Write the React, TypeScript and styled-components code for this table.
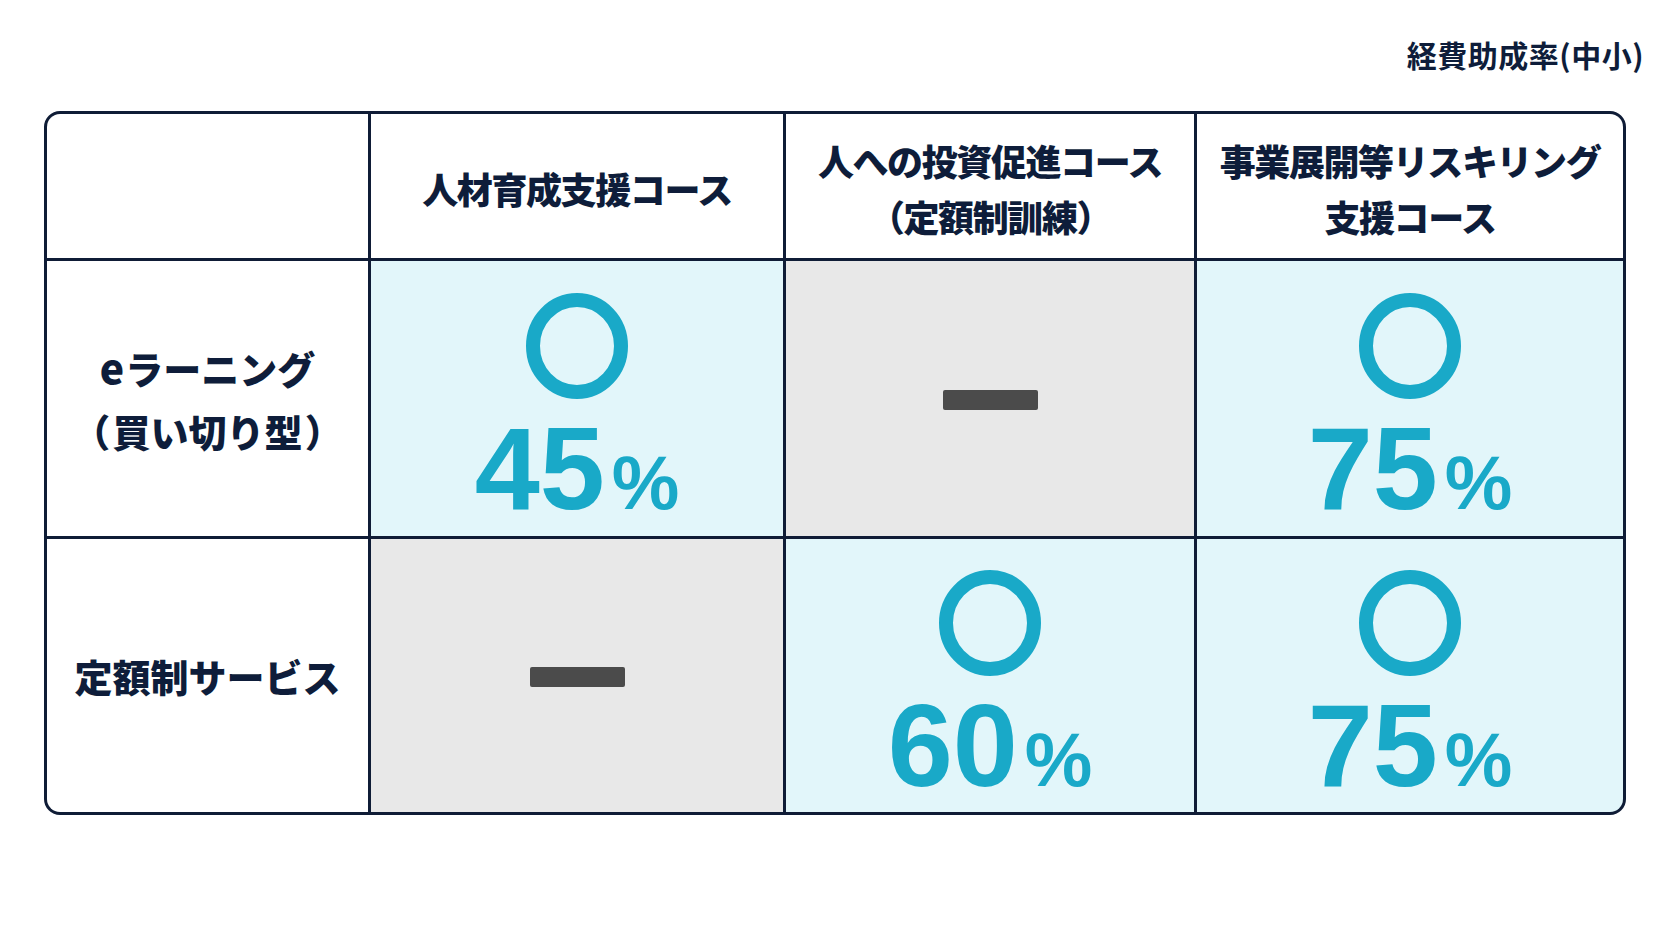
import React from "react";
import styled, { createGlobalStyle } from "styled-components";

const GlobalStyle = createGlobalStyle`
  html, body { margin: 0; padding: 0; background: #ffffff; }
  body { font-family: "Noto Sans CJK JP", "Noto Sans", sans-serif; color: #0e1d3a; }
`;

const Page = styled.div`
  width: 1672px;
  height: 941px;
  box-sizing: border-box;
  padding: 34px 28px 0 44px;
  display: flex;
  flex-direction: column;
`;

const Caption = styled.div`
  align-self: flex-end;
  font-size: 30px;
  font-weight: 700;
  line-height: 40px;
  letter-spacing: 0.5px;
  color: #0e1d3a;
`;

const Table = styled.div`
  margin-top: 37px;
  margin-right: 18px;
  border: 3px solid #0f1c36;
  border-radius: 16px;
  overflow: hidden;
  background: #0f1c36;
  display: grid;
  grid-template-columns: 321px 412px 408px 426px;
  grid-template-rows: 144px 275px 273px;
  gap: 3px;
`;

const HeadCell = styled.div`
  background: #ffffff;
  display: flex;
  align-items: center;
  justify-content: center;
  box-sizing: border-box;
  padding-top: 4px;
`;

const HeadText = styled.div`
  text-align: center;
  font-size: 36px;
  font-weight: 900;
  line-height: 56px;
  letter-spacing: -1.4px;
  color: #0e1d3a;
`;

const LabelCell = styled.div`
  background: #ffffff;
  display: flex;
  align-items: center;
  justify-content: center;
`;

const LabelText = styled.div`
  text-align: center;
  font-size: 38px;
  font-weight: 900;
  line-height: 63px;
  color: #0e1d3a;
`;

const Latin = styled.span`
  margin-right: 1px;
  font-size: 41px;
`;

const Paren = styled.span`
  font-feature-settings: "palt";
  margin: 0 4px;
`;

const ValueCell = styled.div<{ $available: boolean }>`
  background: ${(p) => (p.$available ? "#e2f6fa" : "#e8e8e8")};
  display: flex;
  flex-direction: column;
  align-items: center;
  justify-content: center;
  padding-top: ${(p) => (p.$available ? "22px" : "3px")};
  box-sizing: border-box;
`;

const Mark = styled.svg`
  display: block;
  width: 102px;
  height: 106px;
  margin-bottom: 11px;
`;

const Rate = styled.div`
  display: flex;
  align-items: baseline;
  font-family: "Liberation Sans", Arial, sans-serif;
  font-weight: 700;
  color: #19a9c8;
  line-height: 1;
`;

const Digits = styled.span`
  font-size: 117px;
`;

const Percent = styled.span`
  font-size: 76px;
  margin-left: 7px;
`;

const Dash = styled.div`
  width: 95px;
  height: 20px;
  border-radius: 2px;
  background: #4b4b4b;
`;

const Circle = () => (
  <Mark viewBox="0 0 102 106">
    <ellipse cx="51" cy="53" rx="44" ry="46" fill="none" stroke="#19a9c8" strokeWidth="14" />
  </Mark>
);

type Cell = number | null;

const Value = ({ v }: { v: Cell }) =>
  v === null ? (
    <ValueCell $available={false}>
      <Dash />
    </ValueCell>
  ) : (
    <ValueCell $available>
      <Circle />
      <Rate>
        <Digits>{v}</Digits>
        <Percent>%</Percent>
      </Rate>
    </ValueCell>
  );

const rows: { label: React.ReactNode; values: Cell[] }[] = [
  {
    label: (
      <>
        <Latin>e</Latin>ラーニング
        <br />
        <Paren>（</Paren>買い切り型<Paren>）</Paren>
      </>
    ),
    values: [45, null, 75],
  },
  { label: "定額制サービス", values: [null, 60, 75] },
];

export default function App() {
  return (
    <>
      <GlobalStyle />
      <Page>
        <Caption>経費助成率(中小)</Caption>
        <Table>
          <HeadCell />
          <HeadCell>
            <HeadText>人材育成支援コース</HeadText>
          </HeadCell>
          <HeadCell>
            <HeadText>
              人への投資促進コース
              <br />
              （定額制訓練）
            </HeadText>
          </HeadCell>
          <HeadCell>
            <HeadText>
              事業展開等リスキリング
              <br />
              支援コース
            </HeadText>
          </HeadCell>
          {rows.map((r, i) => (
            <React.Fragment key={i}>
              <LabelCell>
                <LabelText>{r.label}</LabelText>
              </LabelCell>
              {r.values.map((v, j) => (
                <Value key={j} v={v} />
              ))}
            </React.Fragment>
          ))}
        </Table>
      </Page>
    </>
  );
}
